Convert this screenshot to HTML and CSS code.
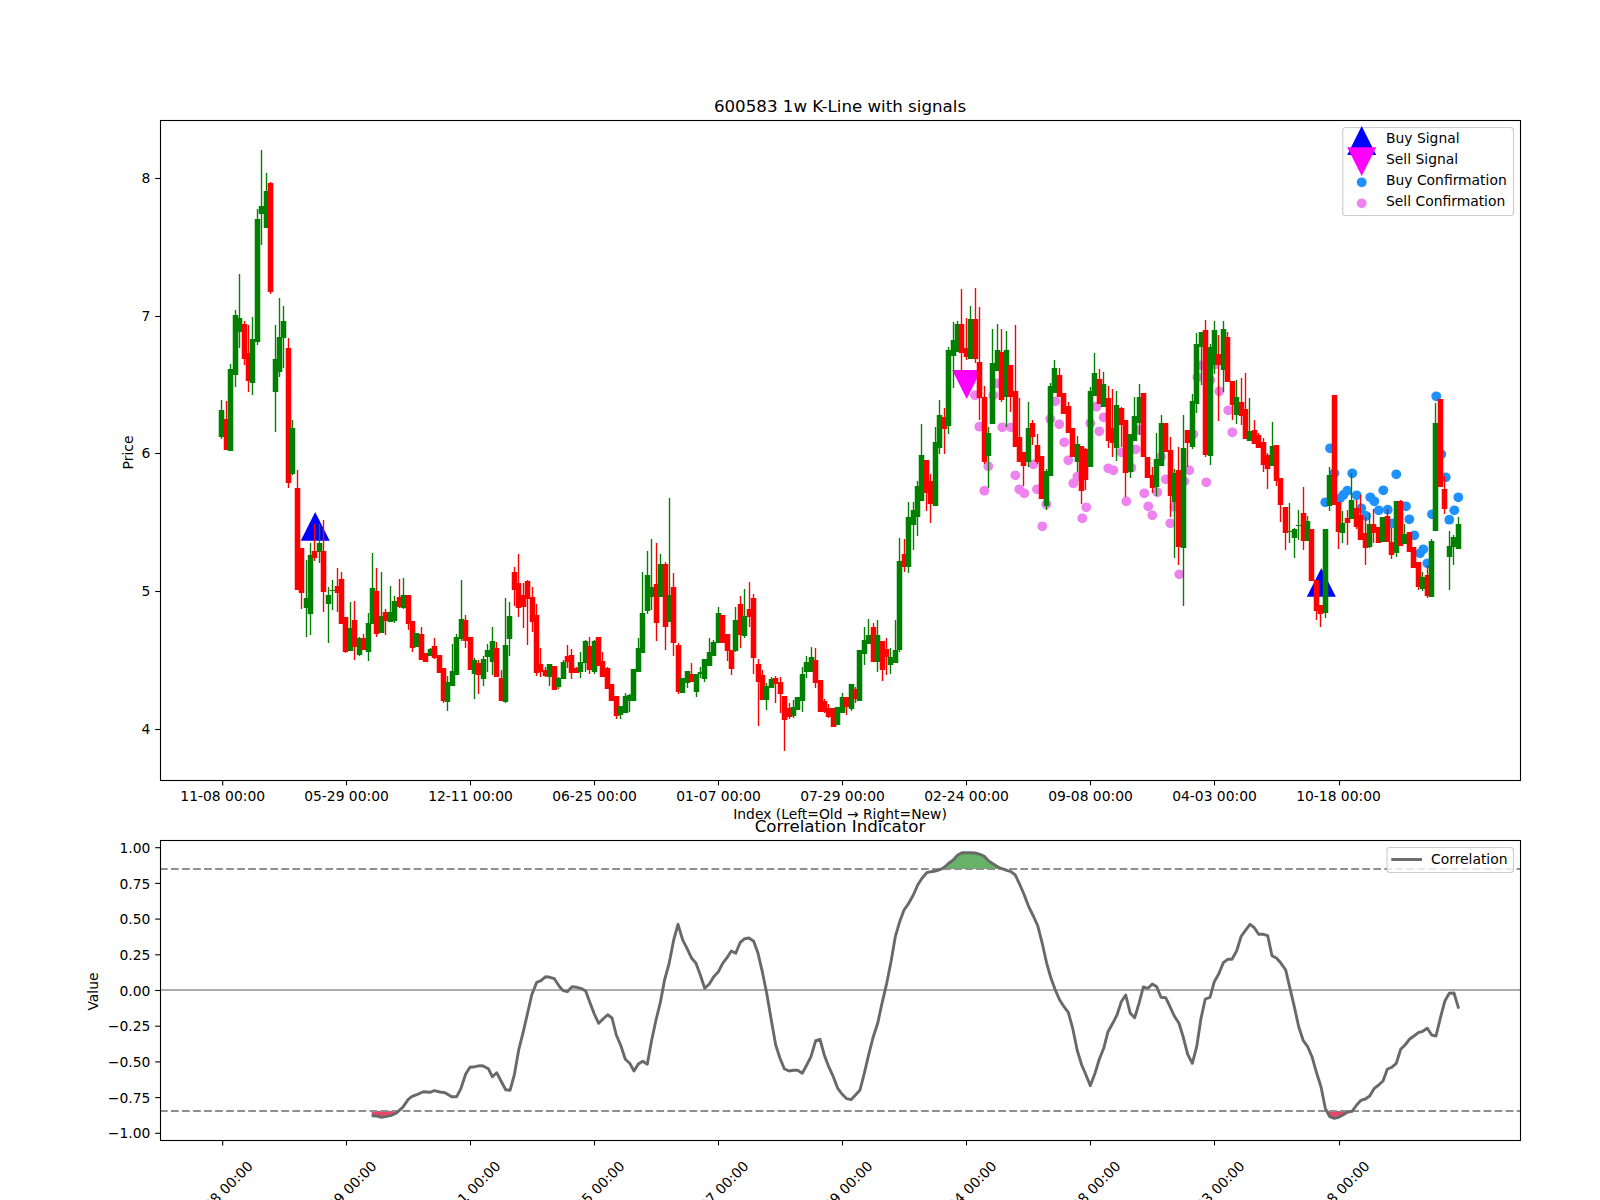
FILE: index.html
```html
<!DOCTYPE html>
<html lang="en">
<head>
    <meta charset="UTF-8">
    <title>600583 1w K-Line with signals</title>
    <link rel="stylesheet" href="styles.css">
</head>
<body>
    <svg id="figure" class="figure" width="1600" height="1200" viewBox="0 0 1600 1200">
        <text class="title" x="840" y="111.7">600583 1w K-Line with signals</text>
        <g id="markers"></g>
        <g id="candles"></g>
        <rect class="frame" x="160.5" y="120.5" width="1360" height="660"></rect>
        <g id="price-axis"></g>
        <text class="label" x="840" y="819">Index (Left=Old → Right=New)</text>
        <text class="label" transform="translate(133 452.5) rotate(-90)">Price</text>

        <g class="legend">
            <rect class="legend-box" x="1342.7" y="127.5" width="170.8" height="88" rx="3"></rect>
            <polygon class="buy" points="1361.7,126 1347.2,155 1376.2,155"></polygon>
            <polygon class="sell" points="1347.2,147.3 1376.2,147.3 1361.7,176"></polygon>
            <circle class="buy-dot" cx="1361.7" cy="182.3" r="4.9"></circle>
            <circle class="sell-dot" cx="1361.7" cy="203.3" r="4.9"></circle>
            <text class="tick-text" x="1386" y="143">Buy Signal</text>
            <text class="tick-text" x="1386" y="164">Sell Signal</text>
            <text class="tick-text" x="1386" y="185">Buy Confirmation</text>
            <text class="tick-text" x="1386" y="206">Sell Confirmation</text>
        </g>

        <text class="title" x="840" y="831.7">Correlation Indicator</text>
        <g id="fills"></g>
        <line class="zero-line" x1="160" y1="990" x2="1520" y2="990"></line>
        <line class="limit-line" x1="160" y1="869" x2="1520" y2="869"></line>
        <line class="limit-line" x1="160" y1="1111" x2="1520" y2="1111"></line>
        <polyline id="corr-line" class="corr-line"></polyline>
        <rect class="frame" x="160.5" y="840.5" width="1360" height="300"></rect>
        <g id="corr-axis"></g>
        <text class="label" transform="translate(98 991.5) rotate(-90)">Value</text>

        <g class="legend">
            <rect class="legend-box" x="1387" y="847.5" width="126.5" height="25" rx="3"></rect>
            <line class="corr-line" x1="1391.3" y1="859.5" x2="1422" y2="859.5"></line>
            <text class="tick-text" x="1431" y="864.3">Correlation</text>
        </g>
    </svg>
    <script src="chart.js"></script>
</body>
</html>
```

FILE: styles.css
```css
html, body { margin: 0; padding: 0; background: #fff; }
.figure { display: block; font-family: "DejaVu Sans", sans-serif; }
.title { font-size: 16.67px; text-anchor: middle; fill: #000; }
.label { font-size: 13.89px; text-anchor: middle; fill: #000; }
.tick-text { font-size: 13.89px; fill: #000; }
.tick-y { text-anchor: end; }
.tick-x { text-anchor: middle; }
.tick-rot { text-anchor: end; }
.tick-mark { stroke: #000; stroke-width: 1.1; }
.frame { fill: none; stroke: #000; stroke-width: 1.1; }
.wick { stroke-width: 1.39; }
.body { stroke-width: 5.55; }
.up { stroke: #008000; }
.down { stroke: #ff0000; }
.buy { fill: #0000ff; }
.sell { fill: #ff00ff; }
.buy-dot { fill: #1e90ff; }
.sell-dot { fill: #ee82ee; }
.legend-box { fill: #fff; fill-opacity: 0.8; stroke: #ccc; stroke-width: 1.1; }
.zero-line { stroke: #adadad; stroke-width: 2; }
.limit-line { stroke: #8f8f8f; stroke-width: 2.08; stroke-dasharray: 7.7 3.33; }
.corr-line { fill: none; stroke: #696969; stroke-width: 2.9; stroke-linejoin: round; }
.fill-high { fill: #66b266; }
.fill-low { fill: #e8476c; }
```

FILE: chart.js
```js
// x position of a bar, 280 weekly bars
function barX(i) {
    return 221.9 + 4.431 * i;
}

// [colour, high, body top, body bottom, low] in screen y
const candles = [
    ['g',400,410,437,439],['r',401,419,450,450],['g',364,369,451,451],['g',310,315,375,387],['g',274,318,332,348],
    ['r',321,324,359,365],['r',325,353,381,392],['g',317,339,383,395],['g',209,219,342,345],['g',150,206,214,245],
    ['g',173,191,228,228],['r',182,183,292,294],['g',325,359,392,432],['g',298,337,372,377],['g',306,321,338,368],
    ['r',338,348,483,488],['g',420,428,474,475],['r',470,488,590,590],['r',548,548,593,609],['g',560,598,608,637],
    ['g',543,555,614,635],['r',524,551,558,561],['g',524,543,552,563],['r',520,551,592,612],['g',587,595,604,643],
    ['g',580,590,591,610],['r',568,586,593,612],['r',572,579,624,624],['r',617,617,652,653],['g',602,628,651,651],
    ['r',601,620,647,660],['g',637,638,655,656],['r',634,638,650,650],['g',613,623,652,661],['g',553,588,624,624],
    ['r',568,591,634,637],['g',572,616,633,633],['r',609,612,621,635],['g',586,612,622,622],['g',596,601,621,623],
    ['r',579,597,607,608],['g',578,595,608,609],['r',595,595,624,630],['r',621,621,648,652],['g',633,633,647,647],
    ['r',627,634,660,660],['r',653,653,662,662],['g',648,649,656,656],['r',638,646,658,659],['r',655,655,673,673],
    ['r',668,668,701,703],['g',676,682,702,711],['g',644,671,686,686],['g',634,637,675,675],['g',580,619,639,641],
    ['r',615,620,641,648],['r',637,637,670,670],['g',658,660,674,699],['r',660,663,675,694],['g',656,659,679,686],
    ['g',644,650,657,672],['g',627,641,662,675],['r',642,648,677,677],['r',670,678,701,701],['g',598,645,702,703],
    ['g',602,616,639,656],['r',567,572,590,606],['r',554,583,608,617],['r',583,595,607,628],['r',580,581,599,645],
    ['r',587,597,622,632],['r',604,615,673,676],['r',648,664,672,677],['r',667,670,676,677],['g',664,664,677,686],
    ['r',666,666,690,690],['g',677,678,687,689],['g',660,662,679,679],['r',645,656,662,668],['r',649,655,673,679],
    ['r',667,668,673,673],['g',652,662,672,678],['g',640,641,663,672],['r',637,646,670,674],['g',640,641,672,674],
    ['r',637,637,666,666],['r',652,661,677,677],['r',667,668,689,689],['r',684,684,701,701],['r',696,696,716,719],
    ['g',706,706,715,719],['g',693,696,713,713],['g',694,695,701,712],['g',669,669,701,701],['g',638,648,672,672],
    ['g',572,613,653,653],['g',551,575,611,614],['g',539,587,597,610],['r',543,584,623,641],['g',554,564,597,597],
    ['r',562,564,627,650],['g',498,595,622,622],['r',573,587,643,656],['r',643,645,692,694],['g',678,678,693,693],
    ['g',671,671,683,688],['r',663,674,682,682],['g',674,674,692,697],['g',667,672,674,678],['g',659,659,679,682],
    ['g',638,652,666,666],['g',640,642,656,656],['g',607,613,643,643],['r',615,615,643,643],['r',634,634,651,661],
    ['r',650,650,669,675],['g',607,620,651,652],['r',596,604,635,648],['g',589,616,636,638],['r',582,609,617,627],
    ['r',594,598,658,674],['r',659,664,682,726],['r',670,675,700,700],['g',683,686,700,710],['g',677,679,688,688],
    ['r',676,678,684,703],['r',677,682,694,713],['r',696,696,720,751],['r',703,708,717,719],['g',700,707,716,718],
    ['g',697,697,710,710],['g',667,674,701,712],['g',656,662,672,678],['g',647,657,672,672],['r',648,660,683,688],
    ['r',680,680,712,712],['r',699,701,712,713],['r',704,708,717,718],['r',708,708,727,727],['g',707,707,725,725],
    ['g',693,697,713,713],['r',697,697,707,715],['g',684,684,709,711],['r',687,689,699,703],['g',650,650,701,701],
    ['g',627,640,654,665],['g',619,635,644,644],['r',623,627,662,662],['g',620,635,662,672],['r',641,641,670,681],
    ['r',638,649,657,675],['g',648,657,665,674],['g',620,650,663,663],['g',538,561,650,652],['r',539,554,567,572],
    ['g',502,517,567,573],['g',502,510,525,550],['g',481,486,517,536],['g',424,455,501,501],['r',460,460,493,511],
    ['r',474,481,504,523],['g',427,442,506,506],['g',400,415,448,454],['r',408,417,429,454],['g',347,350,426,434],
    ['g',322,340,356,388],['g',321,324,352,352],['r',289,324,353,372],['r',318,348,357,360],['g',306,319,359,359],
    ['r',288,319,359,363],['r',307,362,398,420],['r',386,397,462,464],['g',427,433,456,488],['g',329,363,424,424],
    ['g',324,350,371,371],['r',329,352,400,402],['g',331,350,397,427],['r',365,365,397,412],['r',325,391,447,447],
    ['r',398,437,462,462],['r',452,452,466,486],['g',402,428,462,467],['r',420,423,437,445],['r',434,445,462,464],
    ['r',456,456,499,499],['g',469,471,506,510],['g',383,386,476,476],['g',360,368,393,393],['r',368,375,397,397],
    ['r',393,393,414,414],['r',402,406,433,433],['r',428,428,457,457],['g',436,444,462,472],['r',446,446,491,504],
    ['r',448,449,480,490],['g',387,391,467,467],['g',353,373,396,396],['r',369,379,404,404],['g',372,384,407,407],
    ['r',386,398,441,448],['r',389,428,443,457],['g',391,405,448,461],['r',407,408,425,447],['r',420,420,473,497],
    ['g',434,434,472,478],['g',397,416,441,441],['g',384,397,423,435],['r',393,393,457,457],['r',457,457,478,478],
    ['r',467,475,488,493],['g',433,459,487,496],['g',415,423,466,466],['r',423,423,452,452],['r',437,450,496,517],
    ['g',469,473,502,558],['r',447,470,547,565],['g',415,448,548,606],['r',430,430,443,467],['g',394,401,447,449],
    ['g',333,344,404,413],['g',332,332,347,385],['r',320,330,455,457],['g',344,347,456,465],['g',321,330,365,374],
    ['r',335,354,365,421],['g',321,329,370,392],['r',332,337,382,382],['r',381,381,405,420],['g',380,397,415,424],
    ['r',378,402,416,425],['r',373,409,439,439],['g',398,431,441,441],['r',420,430,444,444],['r',433,435,448,448],
    ['r',438,442,465,472],['r',453,455,469,489],['g',422,446,466,466],['r',445,445,481,486],['r',478,478,505,522],
    ['r',507,507,533,550],['g',503,531,532,543],['g',528,529,538,558],['g',510,525,526,540],['r',487,513,541,550],
    ['g',516,521,541,541],['r',529,529,581,581],['r',580,580,611,620],['r',605,605,614,627],['g',529,529,613,618],
    ['g',467,475,506,511],['r',395,395,505,505],['r',502,502,532,549],['g',511,523,533,543],['r',510,518,523,545],
    ['g',473,500,519,519],['r',500,508,527,529],['r',495,515,540,540],['r',517,533,548,565],['g',513,524,547,548],
    ['r',509,524,533,543],['r',527,527,543,543],['g',517,517,542,542],['r',509,516,542,542],['r',528,542,555,559],
    ['g',501,501,553,557],['r',500,501,546,546],['g',524,534,544,544],['r',532,532,552,552],['r',547,547,568,568],
    ['r',562,562,587,590],['g',572,577,589,591],['r',565,575,596,598],['g',539,541,597,597],['g',403,423,531,531],
    ['r',399,399,487,487],['r',476,489,509,514],['g',531,546,557,590],['g',535,537,547,565],['g',517,524,549,549]
];

// points traced from 3x crops, [x, y, x, y, ...] with the crop's origin
function fromCrop(x0, y0, pts) {
    const out = [];
    for (let i = 0; i < pts.length; i += 2) {
        out.push([+(x0 + pts[i] / 3).toFixed(1), +(y0 + pts[i + 1] / 3).toFixed(1)]);
    }
    return out;
}

const sellDots = fromCrop(900, 280, [
    225,346, 238,440, 265,559, 253,632, 280,346, 292,310, 307,442, 333,442, 346,586, 358,628, 373,640,
    400,553, 411,628, 439,673, 427,739, 451,417, 466,364, 478,433, 493,487, 505,541, 520,610, 532,590,
    547,715, 559,682, 571,430, 598,454, 589,380, 611,412, 625,565, 640,571, 664,517, 679,664, 694,563,
    707,508, 718,450, 733,640, 745,679, 757,706, 772,637, 797,598, 784,530, 811,730, 823,680, 838,883,
    853,604, 868,571, 880,463, 919,607, 892,292, 904,256, 931,300, 946,253, 958,334, 985,391, 997,457
]);

const buyDots = fromCrop(1220, 370, [
    330,235, 343,310, 397,310, 316,397, 382,362, 370,375, 360,385, 410,376, 451,382, 463,394, 424,415,
    476,421, 503,419, 438,438, 490,361, 529,313, 558,409, 568,448, 636,433, 583,496, 516,460, 610,538,
    600,550, 622,580, 649,79, 664,253, 677,322, 688,449, 703,421, 715,382
]);

const corr = [].concat(
    fromCrop(80, 780, [
        875,1007, 890,1008, 905,1012, 920,1009, 935,1006, 948,1000, 968,982, 985,958, 995,950, 1010,944,
        1030,935, 1050,937, 1063,932, 1080,936, 1095,938, 1115,950, 1130,950, 1143,925, 1157,882, 1170,862,
        1185,860, 1200,857, 1210,858, 1225,866, 1237,890, 1250,878, 1263,903, 1277,929, 1290,931, 1303,885,
        1316,810, 1330,755, 1345,690, 1355,645, 1370,607, 1383,602, 1397,590, 1410,592, 1423,596
    ]),
    fromCrop(560, 780, [
        0,622, 10,632, 22,635, 36,620, 50,622, 65,626, 77,633, 90,668, 103,702, 116,730, 130,716, 143,704,
        156,714, 169,765, 182,796, 196,838, 209,850, 222,873, 235,852, 248,844, 262,853, 275,780, 288,720,
        301,668, 314,598, 327,552, 341,480, 354,433, 368,480, 381,505, 395,535, 408,550, 421,585, 434,625,
        448,612, 461,590, 474,577, 488,550, 501,533, 514,513, 527,520, 541,487, 554,476, 567,474, 581,484,
        594,520, 607,575, 620,640, 634,720, 647,795, 660,835, 673,866, 687,873, 700,871, 713,871, 727,880,
        740,855, 753,830, 767,782, 780,778, 793,825, 806,860, 820,890, 833,925, 846,942, 860,956, 873,959,
        887,944, 900,930, 913,880, 927,820, 940,770, 953,730, 966,670, 980,610, 993,545, 1006,470, 1019,425,
        1032,390, 1046,370, 1060,345, 1073,315, 1086,295, 1100,278, 1113,275, 1126,273, 1140,269, 1153,262,
        1166,250, 1180,240, 1193,225, 1206,218, 1220,218, 1233,218, 1246,219, 1260,223, 1273,229, 1286,243,
        1300,252, 1313,260, 1326,266, 1340,271, 1353,275, 1366,285, 1380,315, 1393,345, 1406,380, 1420,408,
        1433,437, 1446,487, 1460,550
    ]),
    fromCrop(1050, 780, [
        3,595, 16,630, 29,660, 42,680, 55,697, 68,745, 82,812, 95,855, 108,885, 121,917, 135,880, 148,838,
        161,805, 174,755, 188,730, 201,705, 214,665, 227,645, 241,700, 254,713, 267,670, 280,621, 294,625,
        307,612, 320,620, 333,652, 347,653, 360,680, 373,708, 387,730, 400,772, 413,823, 427,850, 440,800,
        453,715, 466,657, 480,652, 493,605, 506,582, 520,548, 533,538, 546,538, 560,512, 573,470, 586,452,
        600,433, 613,443, 626,463, 640,463, 653,467, 666,527, 680,535, 693,550, 707,570, 720,625, 733,680,
        746,740, 760,782, 773,800, 786,830, 800,880, 813,920, 826,985, 839,1010, 853,1015, 866,1012, 880,1004,
        893,996, 906,994, 920,975, 933,961, 946,957, 959,948, 973,925, 986,915, 999,903, 1012,868, 1025,862,
        1039,850, 1052,808, 1065,795, 1079,777, 1092,768, 1105,758, 1118,754, 1132,745, 1145,765, 1158,768,
        1172,710, 1185,662, 1198,640, 1212,639, 1226,686
    ])
);

const fills = [
    ['fill-high', fromCrop(560, 780, [1148,267, 1153,262, 1166,250, 1180,240, 1193,225, 1206,218, 1220,218, 1233,218,
        1246,219, 1260,223, 1273,229, 1286,243, 1300,252, 1313,260, 1326,267])],
    ['fill-low', fromCrop(80, 780, [875,993, 875,1007, 890,1008, 905,1012, 920,1009, 935,1006, 948,1000, 958,993])],
    ['fill-low', fromCrop(1050, 780, [828,993, 839,1010, 853,1015, 866,1012, 880,1004, 893,996, 900,993])]
];

const tickDates = ['11-08', '05-29', '12-11', '06-25', '01-07', '07-29', '02-24', '09-08', '04-03', '10-18'];
const tickX = [222.7, 346.5, 470.5, 594.5, 718.5, 842.5, 966.5, 1090.5, 1214.5, 1339.5];

function toPoints(pts) {
    return pts.map(function (p) { return p.join(','); }).join(' ');
}

// markers go under the candles
let html = '';
[[315.2, 512, 540.7], [1321.3, 568, 596.7]].forEach(function (t) {
    html += '<polygon class="buy" points="' + t[0] + ',' + t[1] + ' ' + (t[0] - 14.5) + ',' + t[2] + ' ' + (t[0] + 14.5) + ',' + t[2] + '"></polygon>';
});
html += '<polygon class="sell" points="952.2,370 981.2,370 966.7,399"></polygon>';
sellDots.forEach(function (p) {
    html += '<circle class="sell-dot" cx="' + p[0] + '" cy="' + p[1] + '" r="4.9"></circle>';
});
buyDots.forEach(function (p) {
    html += '<circle class="buy-dot" cx="' + p[0] + '" cy="' + p[1] + '" r="4.9"></circle>';
});
document.getElementById('markers').innerHTML = html;

html = '';
candles.forEach(function (c, i) {
    const x = Math.floor(barX(i)) + 0.5;
    const cls = c[0] === 'g' ? 'up' : 'down';
    html += '<line class="wick ' + cls + '" x1="' + x + '" x2="' + x + '" y1="' + c[1] + '" y2="' + c[4] + '"></line>';
    html += '<line class="body ' + cls + '" x1="' + x + '" x2="' + x + '" y1="' + c[2] + '" y2="' + c[3] + '"></line>';
});
document.getElementById('candles').innerHTML = html;

html = '';
fills.forEach(function (f) {
    html += '<polygon class="' + f[0] + '" points="' + toPoints(f[1]) + '"></polygon>';
});
document.getElementById('fills').innerHTML = html;
document.getElementById('corr-line').setAttribute('points', toPoints(corr));

function tickMark(x1, y1, x2, y2) {
    return '<line class="tick-mark" x1="' + x1 + '" y1="' + y1 + '" x2="' + x2 + '" y2="' + y2 + '"></line>';
}

function yTick(y, label, shift) {
    return tickMark(155.2, y, 160, y) +
        '<text class="tick-text tick-y" x="150.3" y="' + (y + shift) + '">' + label + '</text>';
}

// upper axes
html = '';
[[8, 178.5], [7, 316.5], [6, 453.5], [5, 591.5], [4, 729.5]].forEach(function (t) {
    html += yTick(t[1], t[0], 4.5);
});
tickX.forEach(function (x, i) {
    html += tickMark(x, 781, x, 785.4);
    const labelX = i === 9 ? x - 1 : x;
    html += '<text class="tick-text tick-x" x="' + labelX + '" y="801">' + tickDates[i] + ' 00:00</text>';
});
document.getElementById('price-axis').innerHTML = html;

// lower axes
html = '';
[1, 0.75, 0.5, 0.25, 0, -0.25, -0.5, -0.75, -1].forEach(function (v) {
    const y = +(990.5 - 142.8 * v).toFixed(1);
    html += yTick(y, v.toFixed(2).replace('-', '\u2212'), 5.1);
});
tickX.forEach(function (x, i) {
    html += tickMark(x, 1141, x, 1145.4);
    html += '<text class="tick-text tick-rot" transform="translate(' + (x + 31) + ' 1167) rotate(-45)">' + tickDates[i] + ' 00:00</text>';
});
document.getElementById('corr-axis').innerHTML = html;
```
